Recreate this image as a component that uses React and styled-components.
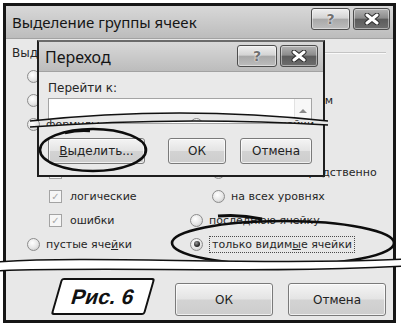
import React from 'react';
import styled, { createGlobalStyle } from 'styled-components';

const GlobalStyle = createGlobalStyle`
  html, body {
    margin: 0;
    padding: 0;
    background: #fff;
  }
  body {
    font-family: "DejaVu Sans", sans-serif;
    color: #262626;
  }
`;

const Canvas = styled.div`
  position: relative;
  width: 401px;
  height: 328px;
  box-sizing: border-box;
  padding: 3px 0 0 3px;
  overflow: hidden;
  background: #fff;
`;

const Window = styled.div`
  width: 393px;
  height: 320px;
  box-sizing: border-box;
  border: 3px solid #161616;
  display: flex;
  flex-direction: column;
  background: #e8e8e8;
`;

const TitleBar = styled.div`
  display: flex;
  align-items: center;
  flex-shrink: 0;
  height: ${p => p.$height}px;
  padding: 0 ${p => p.$right}px 0 ${p => p.$left}px;
  background: linear-gradient(#d8d8d8, #bcbcbc);
  border-bottom: 1px solid #a2a2a2;
  box-sizing: border-box;
`;

const Title = styled.div`
  flex: 1;
  font-family: "Noto Sans", sans-serif;
  font-size: ${p => p.$size}px;
  color: #151515;
  white-space: nowrap;
`;

const CaptionButtons = styled.div`
  display: flex;
  gap: 3px;
  align-self: flex-start;
  margin-top: ${p => p.$top}px;
`;

const CaptionButton = styled.div`
  width: ${p => p.$width}px;
  height: 22px;
  box-sizing: border-box;
  border: 1px solid #4d4d4d;
  border-radius: 3px;
  display: flex;
  align-items: center;
  justify-content: center;
  font-family: "DejaVu Sans", sans-serif;
  font-weight: bold;
  font-size: 14px;
  color: #707070;
  text-shadow: 0 0 2px #fff, 0 0 1px #fff;
  background: ${p =>
    p.$dark
      ? 'linear-gradient(#b4b4b4 0%, #8c8c8c 45%, #5c5c5c 52%, #6e6e6e 100%)'
      : 'linear-gradient(#efefef 0%, #d4d4d4 45%, #a9a9a9 52%, #bdbdbd 100%)'};
  box-shadow: inset 0 0 0 1px rgba(255, 255, 255, 0.45);
`;

const Body = styled.div`
  flex: 1;
  display: flex;
  flex-direction: column;
  min-height: 0;
`;

const GroupHeader = styled.div`
  display: flex;
  align-items: center;
  height: 16px;
  margin: 6px 7px 0 6px;
  gap: 6px;
`;

const GroupLabel = styled.span`
  font-size: 12px;
`;

const GroupLine = styled.div`
  flex: 1;
  height: 0;
  border-top: 1px solid #c4c4c4;
  border-bottom: 1px solid #fafafa;
`;

const OptionGrid = styled.div`
  display: grid;
  grid-template-columns: 163px 1fr;
  grid-auto-rows: 24px;
  grid-auto-flow: column;
  grid-template-rows: repeat(8, 24px);
  margin-top: 3px;
  padding-left: 21px;
`;

const Option = styled.div`
  display: flex;
  align-items: center;
  gap: ${p => (p.$box ? 8 : 6)}px;
  padding-left: ${p => (p.$indent ? 22 : 0)}px;
  font-size: 11px;
  white-space: nowrap;
`;

const Radio = styled.span`
  position: relative;
  width: 13px;
  height: 13px;
  flex-shrink: 0;
  box-sizing: border-box;
  border-radius: 50%;
  border: 1px solid #8c8c8c;
  background: radial-gradient(circle at 40% 35%, #ffffff 0%, #e6e6e6 55%, #bdbdbd 100%);

  &::after {
    content: '';
    display: ${p => (p.$checked ? 'block' : 'none')};
    position: absolute;
    left: 2.5px;
    top: 2.5px;
    width: 6px;
    height: 6px;
    border-radius: 50%;
    background: radial-gradient(circle at 40% 35%, #9a9a9a 0%, #2a2a2a 60%, #111 100%);
  }
`;

const Check = styled.span`
  width: 13px;
  height: 13px;
  flex-shrink: 0;
  box-sizing: border-box;
  border: 1px solid #a3a3a3;
  background: #f6f6f6;
  display: flex;
  align-items: center;
  justify-content: center;
  font-size: 10px;
  color: #a8a8a8;
`;

const Focus = styled.span`
  border: 1px dotted #4a4a4a;
  padding: 1px 2px;
`;

const Footer = styled.div`
  margin-top: auto;
  display: flex;
  align-items: flex-end;
  gap: 15px;
  padding: 0 7px 4px 50px;
`;

const FigureTag = styled.div`
  width: 94px;
  height: 37px;
  margin-right: auto;
  margin-bottom: 1px;
  box-sizing: border-box;
  border: 2px solid #111;
  border-radius: 3px;
  background: #fff;
  transform: skewX(-16deg);
  display: flex;
  align-items: center;
  justify-content: center;
  font-family: "Liberation Sans", sans-serif;
  font-weight: bold;
  font-size: 21px;
  color: #111;
`;

const Button = styled.div`
  width: ${p => p.$width}px;
  height: ${p => p.$height}px;
  box-sizing: border-box;
  border: 1px solid #7a7a7a;
  border-radius: 3px;
  display: flex;
  align-items: center;
  justify-content: center;
  font-size: 12px;
  color: #222;
  background: linear-gradient(#f4f4f4 0%, #e4e4e4 48%, #d3d3d3 52%, #cdcdcd 100%);
  box-shadow: inset 0 0 0 1px rgba(255, 255, 255, 0.7);
`;

const GoTo = styled.div`
  position: absolute;
  left: 37px;
  top: 40px;
  width: 288px;
  height: 137px;
  box-sizing: border-box;
  border: 2px solid #1e1e1e;
  border-top-color: #6a6a6a;
  background: #e9e9e9;
  display: flex;
  flex-direction: column;
  z-index: 1;
  clip-path: path(evenodd, 'M0 0H288V137H0Z M-7 81 Q143 65 291 81 L291 85 Q143 76 -7 87Z');
`;

const GoToBody = styled.div`
  display: flex;
  flex-direction: column;
  padding: 8px 9px 0;
`;

const FieldLabel = styled.div`
  font-size: 12px;
  line-height: 16px;
`;

const Field = styled.div`
  margin-top: 2px;
  width: 264px;
  height: 26px;
  box-sizing: border-box;
  border: 1px solid #a4a4a4;
  background: #fff;
  display: flex;
  justify-content: flex-end;
`;

const ScrollBar = styled.div`
  width: 17px;
  border-left: 1px solid #e2e2e2;
  background: #f7f7f7;
  display: flex;
  justify-content: center;
  padding-top: 10px;
  box-sizing: border-box;
`;

const ArrowUp = styled.span`
  width: 0;
  height: 0;
  border-left: 4px solid transparent;
  border-right: 4px solid transparent;
  border-bottom: 4px solid #8a8a8a;
`;

const ButtonRow = styled.div`
  display: flex;
  margin-top: 14px;
`;

const Annotations = styled.svg`
  position: absolute;
  left: 0;
  top: 0;
  z-index: 2;
  pointer-events: none;
`;

const CloseGlyph = () => (
  <svg width="16" height="12" viewBox="0 0 16 12">
    <path d="M3 2 L13 10 M13 2 L3 10" stroke="#2c2c2c" strokeWidth="5" strokeLinecap="round" />
    <path d="M3 2 L13 10 M13 2 L3 10" stroke="#fff" strokeWidth="3" strokeLinecap="round" />
  </svg>
);

const leftOptions = [
  { kind: 'radio', text: 'примечания' },
  { kind: 'radio', text: 'константы' },
  { kind: 'radio', text: 'формулы' },
  { kind: 'check', text: 'числа' },
  { kind: 'check', text: 'текст' },
  { kind: 'check', text: 'логические' },
  { kind: 'check', text: 'ошибки' },
  { kind: 'radio', text: <>пустые яче<u>й</u>ки</> },
];

const rightOptions = [
  { text: 'отличия по строкам' },
  { text: 'отличия по столбцам' },
  { text: 'влияющие ячейки' },
  { text: 'зависимые ячейки' },
  { text: 'только непосредственно', indent: true },
  { text: 'на всех уровнях', indent: true },
  { text: 'последнюю ячейку' },
  { text: <>только видим<u>ы</u>е ячейки</>, checked: true },
];

const App = () => (
  <Canvas>
    <GlobalStyle />
    <Window>
      <TitleBar $height={33} $left={6} $right={3}>
        <Title $size={15}>Выделение группы ячеек</Title>
        <CaptionButtons $top={2}>
          <CaptionButton $width={39}>?</CaptionButton>
          <CaptionButton $width={37} $dark>
            <CloseGlyph />
          </CaptionButton>
        </CaptionButtons>
      </TitleBar>
      <Body>
        <GroupHeader>
          <GroupLabel>Выделить</GroupLabel>
          <GroupLine />
        </GroupHeader>
        <OptionGrid>
          {leftOptions.map((o, i) => (
            <Option key={i} $indent={o.kind === 'check'} $box={o.kind === 'check'}>
              {o.kind === 'check' ? <Check>✓</Check> : <Radio />}
              <span>{o.text}</span>
            </Option>
          ))}
          {rightOptions.map((o, i) => (
            <Option key={i} $indent={o.indent}>
              <Radio $checked={o.checked} />
              {o.checked ? <Focus>{o.text}</Focus> : <span>{o.text}</span>}
            </Option>
          ))}
        </OptionGrid>
        <Footer>
          <FigureTag>Рис. 6</FigureTag>
          <Button $width={98} $height={33}>ОК</Button>
          <Button $width={98} $height={33}>Отмена</Button>
        </Footer>
      </Body>
    </Window>

    <GoTo>
      <TitleBar $height={30} $left={6} $right={5}>
        <Title $size={16}>Переход</Title>
        <CaptionButtons $top={3}>
          <CaptionButton $width={40}>?</CaptionButton>
          <CaptionButton $width={38} $dark>
            <CloseGlyph />
          </CaptionButton>
        </CaptionButtons>
      </TitleBar>
      <GoToBody>
        <FieldLabel>Перейти к:</FieldLabel>
        <Field>
          <ScrollBar>
            <ArrowUp />
          </ScrollBar>
        </Field>
        <ButtonRow>
          <Button $width={97} $height={26}><span><u>В</u>ыделить...</span></Button>
          <Button $width={58} $height={26} style={{ marginLeft: 23 }}>ОК</Button>
          <Button $width={72} $height={26} style={{ marginLeft: 14 }}>Отмена</Button>
        </ButtonRow>
      </GoToBody>
    </GoTo>

    <Annotations width="401" height="328" viewBox="0 0 401 328">
      <g fill="none" stroke="#111" strokeWidth="1.4">
        <path d="M30 121 Q180 105 328 121" />
        <path d="M30 127 Q180 116 328 125" />
      </g>
      <g fill="none" stroke="#0d0d0d" strokeWidth="2.6">
        <ellipse cx="93" cy="150" rx="53" ry="21" />
        <path d="M65 133 Q78 130 90 131" />
        <ellipse cx="283" cy="243" rx="111" ry="22" />
        <path d="M218 216 Q240 214 262 219" strokeWidth="3" />
      </g>
      <path
        d="M-5 262 C100 255 250 266 406 259 L406 266 C250 274 100 266 -5 271 Z"
        fill="#fff"
      />
      <g fill="none" stroke="#111" strokeWidth="1.6">
        <path d="M-5 262 C100 255 250 266 406 259" />
        <path d="M-5 271 C100 266 250 274 406 266" />
      </g>
    </Annotations>
  </Canvas>
);

export default App;
